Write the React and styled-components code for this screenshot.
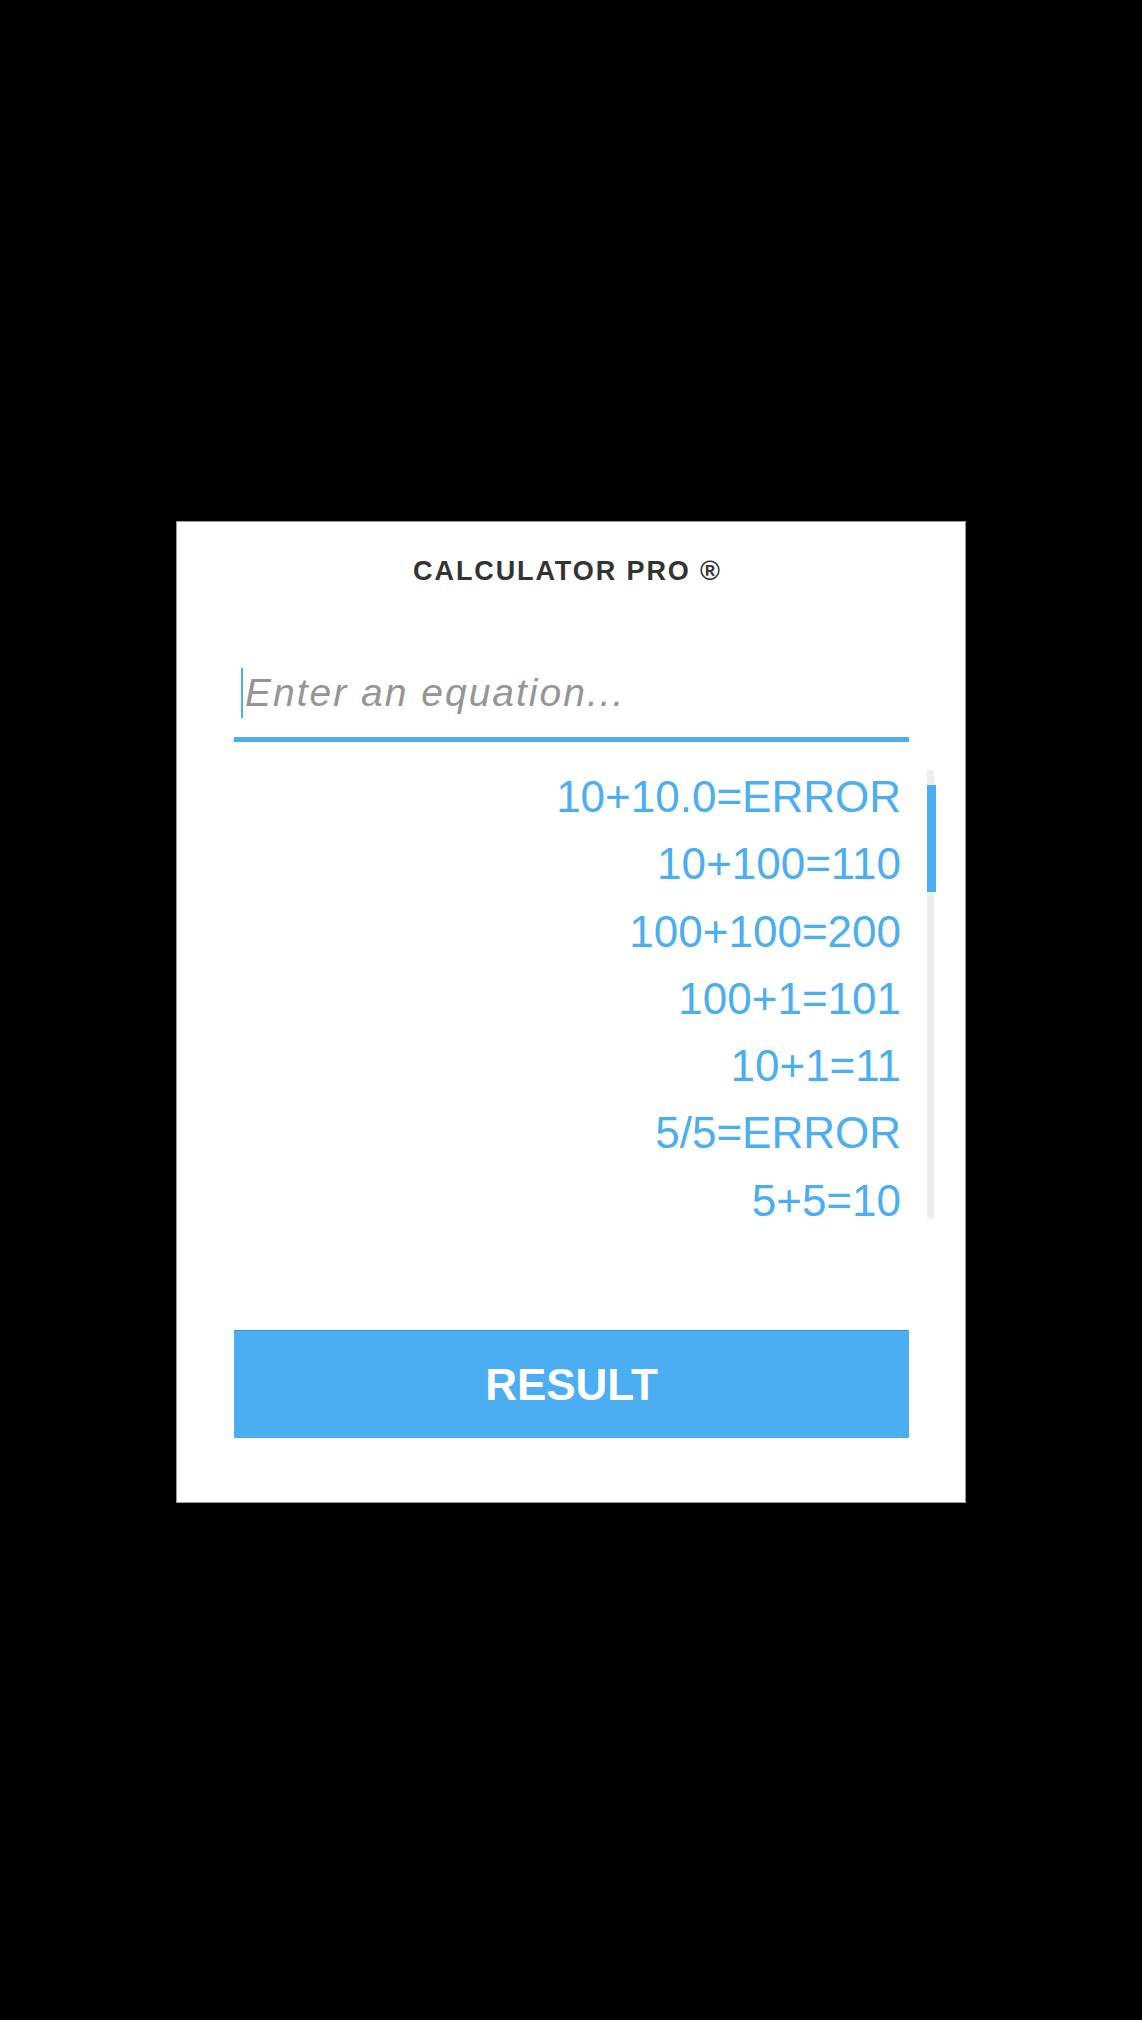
import React from "react";
import styled, { createGlobalStyle } from "styled-components";

const GlobalStyle = createGlobalStyle`
  html, body {
    margin: 0;
    padding: 0;
    background: #000;
  }
  body {
    font-family: "Liberation Sans", Arial, sans-serif;
  }
  * { box-sizing: border-box; }
`;

const BLUE = "#4badf2";

const Page = styled.main`
  min-height: 100vh;
  display: flex;
  justify-content: center;
  align-items: center;
  background: #000;
`;

const Card = styled.section`
  width: 790px;
  margin-top: 4px;
  background: #fff;
  border: 1px solid #9a9a9a;
  padding: 34px 56px 64px 57px;
  display: flex;
  flex-direction: column;
`;

const Title = styled.h1`
  margin: 0 0 0 -8px;
  font-size: 27px;
  line-height: 31px;
  font-weight: 700;
  letter-spacing: 1.9px;
  color: #333;
  text-align: center;
`;

const InputRow = styled.label`
  margin-top: 81px;
  display: flex;
  align-items: center;
  padding: 0 0 19px 7px;
  border-bottom: 5px solid ${BLUE};
`;

const Caret = styled.span`
  width: 2px;
  height: 50px;
  background: ${BLUE};
  flex: none;
`;

const EquationInput = styled.input`
  flex: 1;
  height: 50px;
  border: none;
  outline: none;
  background: transparent;
  padding: 0 0 0 2px;
  font-family: "Liberation Sans", Arial, sans-serif;
  font-size: 39px;
  font-style: italic;
  letter-spacing: 2px;
  color: #333;
  &::placeholder {
    color: #959595;
    opacity: 1;
  }
`;

const ListArea = styled.div`
  margin: 21px -27px 0 0;
  display: flex;
  gap: 26px;
`;

const Entries = styled.ul`
  flex: 1;
  margin: 0;
  padding: 0;
  list-style: none;
`;

const Entry = styled.li`
  font-size: 44px;
  line-height: 67.3px;
  color: ${BLUE};
  text-align: right;
  white-space: nowrap;
`;

const ScrollColumn = styled.div`
  width: 9px;
  flex: none;
`;

const Track = styled.div`
  margin-top: 7px;
  padding-top: 15px;
  width: 7px;
  height: 449px;
  background: #eeeeee;
`;

const Thumb = styled.div`
  width: 9px;
  height: 107px;
  background: ${BLUE};
`;

const ResultButton = styled.button`
  margin-top: 96px;
  height: 108px;
  width: 100%;
  border: none;
  border-top: 1px solid #3f93d3;
  background: ${BLUE};
  color: #fff;
  font-family: "Liberation Sans", Arial, sans-serif;
  font-size: 44px;
  font-weight: 700;
  cursor: pointer;
  padding: 0;
`;

const history = [
  "10+10.0=ERROR",
  "10+100=110",
  "100+100=200",
  "100+1=101",
  "10+1=11",
  "5/5=ERROR",
  "5+5=10",
];

export default function App() {
  return (
    <>
      <GlobalStyle />
      <Page>
        <Card>
          <Title>CALCULATOR PRO ®</Title>
          <InputRow>
            <Caret />
            <EquationInput placeholder="Enter an equation..." />
          </InputRow>
          <ListArea>
            <Entries>
              {history.map((h) => (
                <Entry key={h}>{h}</Entry>
              ))}
            </Entries>
            <ScrollColumn>
              <Track>
                <Thumb />
              </Track>
            </ScrollColumn>
          </ListArea>
          <ResultButton>RESULT</ResultButton>
        </Card>
      </Page>
    </>
  );
}
